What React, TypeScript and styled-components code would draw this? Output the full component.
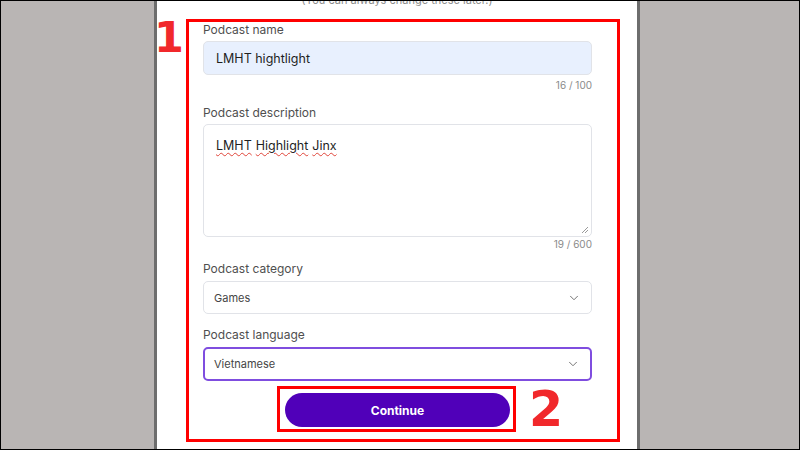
import React from 'react';
import styled, {createGlobalStyle} from "styled-components";
import {ChevronDown} from "lucide-react";

const GlobalStyle = createGlobalStyle`
  * { box-sizing: border-box; }
  body {
    margin: 0;
    background: #b9b5b4;
    font-family: Inter, "Noto Sans", Arial, sans-serif;
  }
`
const Screen = styled.div`
  width: 800px;
  height: 450px;
  border: 1px solid #000;
  background: #b9b5b4;
  display: grid;
  grid-template-columns: 153px 486px 1fr;
  overflow: hidden;
`
const Modal = styled.section`
  grid-column: 2;
  height: 100%;
  background: #fff;
  border-left: 3px solid #6d6d6d;
  border-right: 3px solid #6d6d6d;
  display: flex;
  flex-direction: column;
`
const Subtitle = styled.p`
  margin: -8px 0 0;
  font-size: 11px;
  line-height: 14px;
  text-align: center;
  color: #8c8c8c;
`
const FormBox = styled.div`
  position: relative;
  margin: 12px 17px 0 29px;
  height: 423px;
  border: 3px solid #ff0000;
  padding: 0 25px 6px 14px;
  display: flex;
  flex-direction: column;
`
const Marker = styled.span<{ $size: number }>`
  position: absolute;
  font-family: "DejaVu Sans", sans-serif;
  font-weight: 700;
  font-size: ${p => p.$size}px;
  line-height: 1;
  color: #f1282b;
`
const MarkerOne = styled(Marker)`
  left: -35px;
  top: -6px;
`
const MarkerTwo = styled(Marker)`
  left: calc(100% + 16px);
  top: -4px;
`
const Label = styled.label<{ $gap: number, $below: number }>`
  display: block;
  margin-top: ${p => p.$gap}px;
  margin-bottom: ${p => p.$below}px;
  font-size: 12px;
  line-height: 16px;
  color: #4f4f4f;
`
const Field = styled.div<{ $h: number, $fill?: boolean }>`
  height: ${p => p.$h}px;
  border: 1px solid #e1e3e8;
  border-radius: 5px;
  background: ${p => p.$fill ? '#e8f0fe' : '#fff'};
  padding: 0 12px;
  display: flex;
  align-items: center;
  font-size: 12.5px;
  color: #1f1f1f;
`
const AreaBox = styled.div`
  position: relative;
  height: 113px;
  border: 1px solid #e1e3e8;
  border-radius: 5px;
  padding: 13px 12px;
  font-size: 12.5px;
  line-height: 16px;
  color: #1f1f1f;
  display: flex;
  gap: 4px;
  align-items: flex-start;
`
const Word = styled.span`
  text-decoration: underline wavy #e0453a;
  text-decoration-thickness: 1px;
  text-underline-offset: 2px;
`
const Grip = styled.svg`
  position: absolute;
  right: 2px;
  bottom: 2px;
`
const Counter = styled.div<{ $top: number }>`
  margin-top: ${p => p.$top}px;
  text-align: right;
  font-size: 10px;
  line-height: 12px;
  color: #8a8a8a;
`
const Select = styled.div<{ $h: number, $active?: boolean }>`
  height: ${p => p.$h}px;
  border: ${p => p.$active ? '2px solid #7f4ddf' : '1px solid #e1e3e8'};
  border-radius: 5px;
  padding: 0 10px 0 ${p => p.$active ? 9 : 10}px;
  display: flex;
  align-items: center;
  justify-content: space-between;
  font-size: 11px;
  color: #454545;
  svg { color: #6b6b6b; }
`
const ButtonBox = styled.div`
  position: relative;
  align-self: center;
  margin-top: 5px;
  margin-left: -2px;
  border: 3px solid #ff0000;
  padding: 4px 3px 2px 5px;
`
const ContinueButton = styled.button`
  width: 225px;
  height: 34px;
  border: none;
  border-radius: 17px;
  background: #5000b9;
  color: #fff;
  font-family: Inter, Arial, sans-serif;
  font-weight: 700;
  font-size: 12px;
  display: block;
`

const App: React.FC = () => {
    return (
        <Screen>
            <GlobalStyle/>
            <Modal>
                <Subtitle>(You can always change these later.)</Subtitle>
                <FormBox>
                    <MarkerOne $size={43}>1</MarkerOne>
                    <Label $gap={0} $below={3}>Podcast name</Label>
                    <Field $h={34} $fill>LMHT hightlight</Field>
                    <Counter $top={4}>16 / 100</Counter>

                    <Label $gap={14} $below={3}>Podcast description</Label>
                    <AreaBox>
                        <Word>LMHT</Word> <Word>Highlight</Word> <Word>Jinx</Word>
                        <Grip width="8" height="8" viewBox="0 0 8 8">
                            <path d="M7 1 L1 7 M7 4 L4 7" stroke="#9a9a9a" strokeWidth="1"/>
                        </Grip>
                    </AreaBox>
                    <Counter $top={1}>19 / 600</Counter>

                    <Label $gap={11} $below={4}>Podcast category</Label>
                    <Select $h={33}>
                        Games
                        <ChevronDown size={14} strokeWidth={1.6}/>
                    </Select>

                    <Label $gap={13} $below={4}>Podcast language</Label>
                    <Select $h={34} $active>
                        Vietnamese
                        <ChevronDown size={14} strokeWidth={1.6}/>
                    </Select>

                    <ButtonBox>
                        <ContinueButton>Continue</ContinueButton>
                        <MarkerTwo $size={49}>2</MarkerTwo>
                    </ButtonBox>
                </FormBox>
            </Modal>
        </Screen>
    );
};
export default App;
